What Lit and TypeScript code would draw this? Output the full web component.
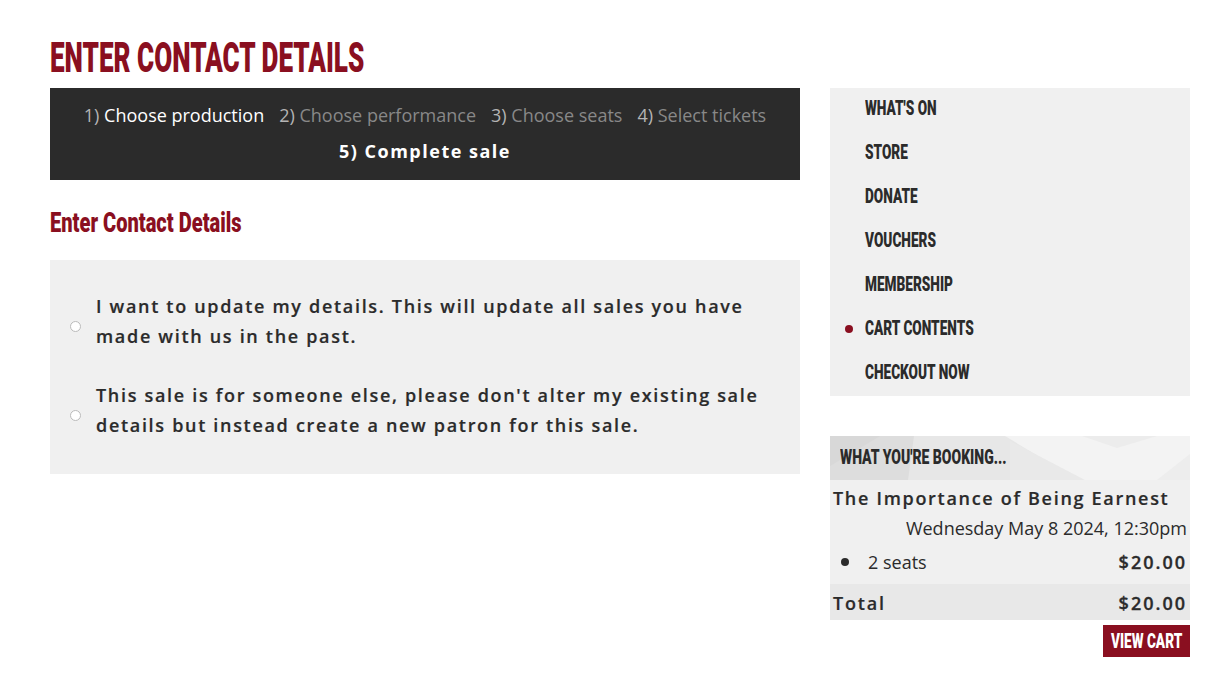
import { LitElement, html, css } from "lit";
import { customElement } from "lit/decorators.js";

const MENU = [
  "WHAT'S ON",
  "STORE",
  "DONATE",
  "VOUCHERS",
  "MEMBERSHIP",
  "CART CONTENTS",
  "CHECKOUT NOW",
];

const STEPS = [
  { num: "1)", label: "Choose production", done: true },
  { num: "2)", label: "Choose performance", done: false },
  { num: "3)", label: "Choose seats", done: false },
  { num: "4)", label: "Select tickets", done: false },
];

@customElement("app-root")
export class AppRoot extends LitElement {
  static styles = css`
    :host {
      display: block;
      background: #fff;
      color: #2b2b2b;
      font-family: "Open Sans", "Noto Sans", sans-serif;
      height: 676px;
      overflow: hidden;
    }

    * {
      box-sizing: border-box;
      margin: 0;
      padding: 0;
    }

    .page {
      padding: 38px 34px 0 50px;
    }

    .title {
      height: 50px;
    }

    .columns {
      display: flex;
      gap: 30px;
      align-items: flex-start;
    }

    .main {
      width: 750px;
    }

    .side {
      width: 360px;
    }

    /* no condensed face installed, so squeeze a heavy sans */
    .display {
      font-family: "Roboto", "Liberation Sans", sans-serif;
      font-weight: 900;
      display: inline-block;
      transform-origin: left center;
      white-space: nowrap;
    }

    .title .display {
      font-size: 42px;
      line-height: 40px;
      color: #8a0f20;
      transform: scaleX(0.621);
    }

    .steps {
      background: #2b2b2b;
      color: #b4b4b4;
      height: 92px;
      text-align: center;
      font-size: 18px;
      line-height: 36px;
      padding-top: 9px;
    }

    .steps .row {
      display: flex;
      justify-content: center;
      gap: 15px;
    }

    .steps .off {
      color: #888;
    }

    .steps .on {
      color: #fff;
    }

    .steps .last {
      color: #fff;
      font-weight: 700;
      letter-spacing: 1.5px;
    }

    .sub {
      height: 80px;
      padding-top: 26px;
    }

    .sub .display {
      font-size: 28px;
      line-height: 32px;
      color: #8a0f20;
      transform: scaleX(0.717);
    }

    .panel {
      background: #f0f0f0;
      height: 214px;
      padding: 31px 20px 0 20px;
      display: flex;
      flex-direction: column;
      gap: 29px;
      font-size: 18px;
      font-weight: 600;
      letter-spacing: 1.69px;
      line-height: 30px;
      -webkit-text-stroke: 0.2px #2b2b2b;
    }

    .choice {
      display: flex;
      align-items: center;
      gap: 15px;
    }

    .radio {
      flex: none;
      width: 11px;
      height: 11px;
      margin-top: 10px;
      border: 1px solid #bbb;
      border-radius: 50%;
      background: #fff;
    }

    .menu {
      background: #f0f0f0;
      list-style: none;
      margin-bottom: 40px;
    }

    .menu li {
      height: 44px;
      padding: 0 0 4px 35px;
      display: flex;
      align-items: center;
      position: relative;
    }

    .menu .display {
      font-size: 21px;
      transform: scaleX(0.649);
    }

    .menu li.current::before {
      content: "";
      position: absolute;
      left: 15px;
      top: 17px;
      width: 8px;
      height: 8px;
      border-radius: 50%;
      background: #8a0f20;
    }

    .booking-head {
      position: relative;
      height: 44px;
      padding: 0 0 2px 10px;
      display: flex;
      align-items: center;
      background: #e7e7e7;
    }

    .booking-art {
      position: absolute;
      inset: 0;
      width: 100%;
      height: 100%;
    }

    .booking-head .display {
      position: relative;
      font-size: 21px;
      transform: scaleX(0.666);
    }

    .booking {
      background: #f0f0f0;
      font-size: 18px;
    }

    .show {
      padding: 3px 3px 0;
      font-weight: 600;
      letter-spacing: 1.7px;
      line-height: 30px;
      -webkit-text-stroke: 0.2px #2b2b2b;
    }

    .when {
      padding: 0 3px;
      text-align: right;
      line-height: 30px;
    }

    .line {
      display: flex;
      justify-content: space-between;
      align-items: center;
      height: 41px;
      padding: 0 3px 3px 11px;
    }

    .seats {
      display: flex;
      align-items: center;
      gap: 19px;
    }

    .dot {
      width: 8px;
      height: 8px;
      border-radius: 50%;
      background: #2b2b2b;
    }

    .money {
      font-weight: 600;
      letter-spacing: 2px;
      -webkit-text-stroke: 0.3px #2b2b2b;
    }

    .total {
      display: flex;
      justify-content: space-between;
      align-items: center;
      height: 36px;
      padding: 2px 3px 0;
      background: #e8e8e8;
      font-weight: 600;
      letter-spacing: 1.8px;
      -webkit-text-stroke: 0.2px #2b2b2b;
    }

    .total .money {
      letter-spacing: 2px;
    }

    .actions {
      display: flex;
      justify-content: flex-end;
      padding-top: 5px;
    }

    .view {
      width: 87px;
      height: 32px;
      background: #8a0f20;
      display: flex;
      align-items: center;
      padding-left: 8px;
    }

    .view .display {
      font-size: 21px;
      color: #fff;
      transform: scaleX(0.648);
    }
  `;

  render() {
    return html`
      <div class="page">
        <h1 class="title"><span class="display">ENTER CONTACT DETAILS</span></h1>

        <div class="columns">
          <div class="main">
            <div class="steps">
              <div class="row">
                ${STEPS.map(
                  (s) => html`<span
                    >${s.num}
                    <span class=${s.done ? "on" : "off"}>${s.label}</span></span
                  >`,
                )}
              </div>
              <div class="last">5) Complete sale</div>
            </div>

            <h2 class="sub"><span class="display">Enter Contact Details</span></h2>

            <div class="panel">
              <label class="choice">
                <span class="radio"></span>
                <span
                  >I want to update my details. This will update all sales you
                  have made with us in the past.</span
                >
              </label>
              <label class="choice">
                <span class="radio"></span>
                <span
                  >This sale is for someone else, please don't alter my existing
                  sale details but instead create a new patron for this
                  sale.</span
                >
              </label>
            </div>
          </div>

          <aside class="side">
            <ul class="menu">
              ${MENU.map(
                (m) =>
                  html`<li class=${m === "CART CONTENTS" ? "current" : ""}>
                    <span class="display">${m}</span>
                  </li>`,
              )}
            </ul>
            <div class="booking-head">
              <svg
                class="booking-art"
                viewBox="0 0 360 44"
                preserveAspectRatio="none"
              >
                <polygon points="0,0 84,0 78,44 0,44" fill="#dddddd" />
                <polygon points="0,0 50,0 0,30" fill="#d8d8d8" />
                <polygon points="175,0 360,0 360,44 248,44" fill="#f3f3f3" />
                <polygon points="180,5 255,44 180,44" fill="#e9e9e9" />
                <polygon points="252,0 327,0 287,12" fill="#ececec" />
                <polygon points="360,18 327,44 360,44" fill="#ededed" />
              </svg>
              <span class="display">WHAT YOU'RE BOOKING...</span>
            </div>
            <div class="booking">
              <div class="show">The Importance of Being Earnest</div>
              <div class="when">Wednesday May 8 2024, 12:30pm</div>
              <div class="line">
                <span class="seats"><span class="dot"></span>2 seats</span>
                <span class="money">$20.00</span>
              </div>
              <div class="total">
                <span>Total</span><span class="money">$20.00</span>
              </div>
            </div>
            <div class="actions">
              <div class="view"><span class="display">VIEW CART</span></div>
            </div>
          </aside>
        </div>
      </div>
    `;
  }
}
